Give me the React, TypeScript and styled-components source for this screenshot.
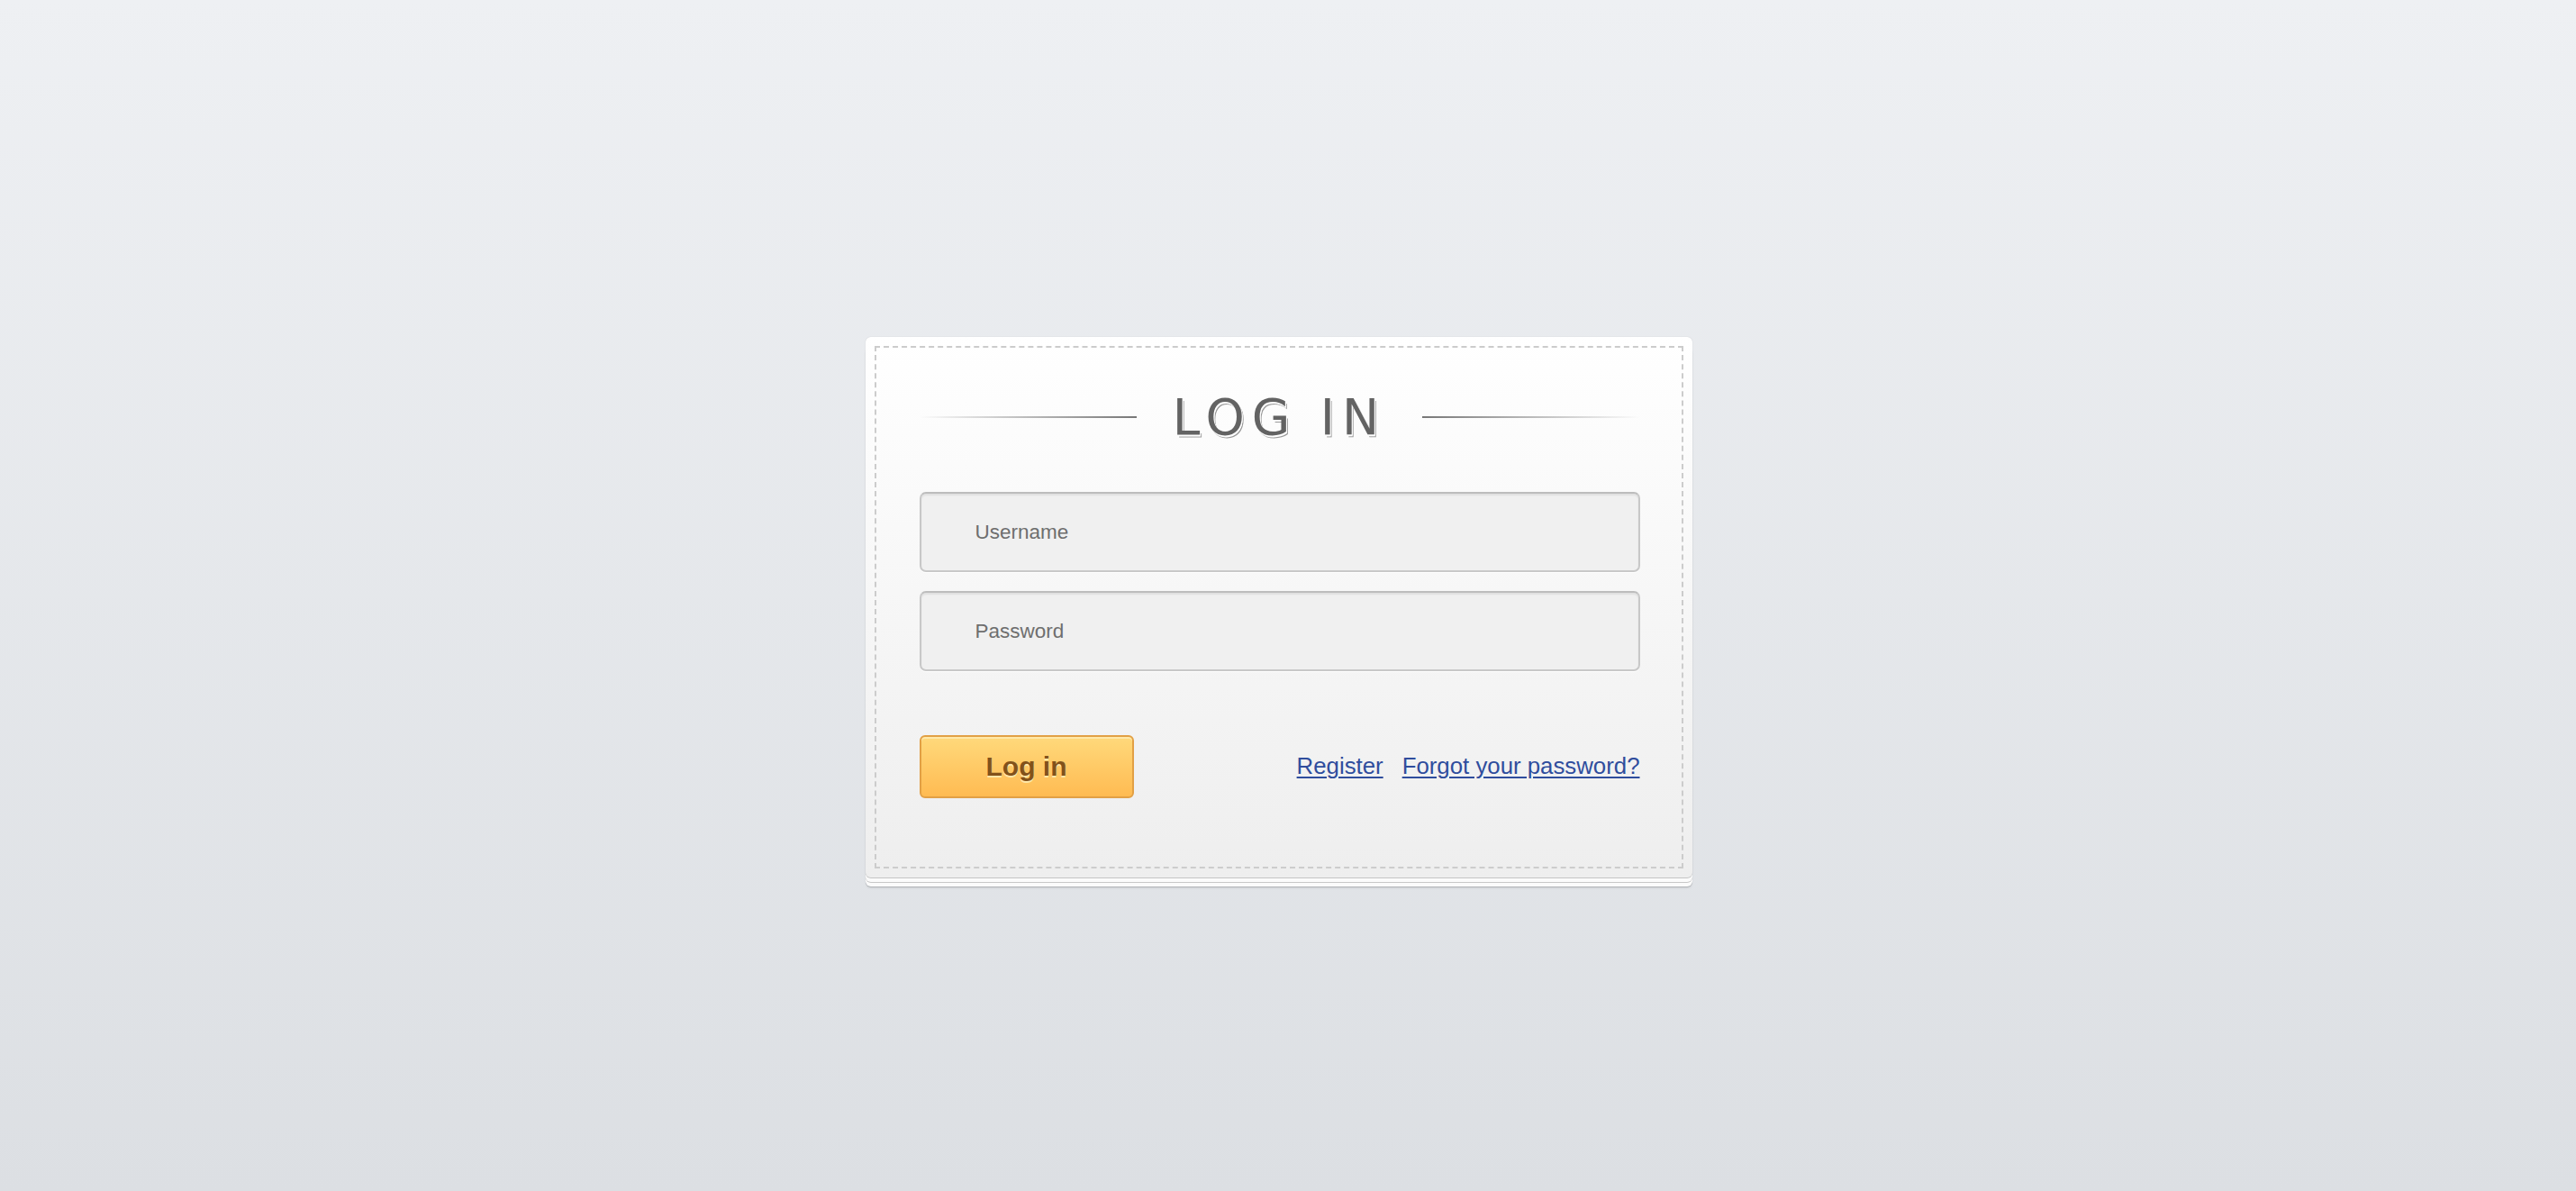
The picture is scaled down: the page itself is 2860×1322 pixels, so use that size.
import React from "react";
import styled, { createGlobalStyle } from "styled-components";

const GlobalStyle = createGlobalStyle`
  html, body { margin: 0; padding: 0; }
  body {
    font-family: "Liberation Sans", Arial, sans-serif;
    background: linear-gradient(180deg, #eef0f3 0%, #dcdfe3 100%);
    min-height: 100vh;
  }
`;

const Page = styled.div`
  min-height: 100vh;
  box-sizing: border-box;
  display: flex;
  justify-content: center;
  align-items: flex-start;
  padding: 374px 21px 0 0;
`;

const Card = styled.form`
  width: 918px;
  box-sizing: border-box;
  padding: 10px;
  border-radius: 6px;
  background: linear-gradient(180deg, #ffffff 0%, #eeeeee 100%);
  box-shadow:
    0 0 1px rgba(0, 0, 0, 0.25),
    0 1px 0 #cacaca,
    0 5px 0 #fbfbfb,
    0 6px 0 #c8c8c8,
    0 10px 0 #fbfbfb,
    0 11px 0 #b2b5b9,
    0 12px 2px rgba(0, 0, 0, 0.08);
`;

const Inner = styled.div`
  border: 2px dashed #cccccc;
  padding: 45px 46px 76px 48px;
  display: flex;
  flex-direction: column;
`;

const TitleRow = styled.div`
  display: flex;
  align-items: center;
  margin-bottom: 51px;
`;

const Rule = styled.span<{ $side: "left" | "right" }>`
  flex: 1;
  height: 2px;
  background: ${(p) =>
    p.$side === "left"
      ? "linear-gradient(90deg, rgba(120,120,120,0) 0%, #777 100%)"
      : "linear-gradient(90deg, #777 0%, rgba(120,120,120,0) 100%)"};
`;

const Title = styled.h1`
  margin: 0 40px;
  font-family: "DejaVu Sans", Verdana, sans-serif;
  font-weight: normal;
  font-size: 55px;
  line-height: 64px;
  letter-spacing: 8px;
  color: #636363;
  text-shadow: 1px 1px 0 #ffffff, 1px 2px 0 #ffffff, 2px 3px 0 #999999;
  white-space: nowrap;
`;

const Field = styled.input`
  display: block;
  width: 100%;
  height: 89px;
  box-sizing: border-box;
  margin: 0 0 21px;
  padding: 0 20px 0 60px;
  border: 2px solid #c8c8c8;
  border-top-color: #bdbdbd;
  border-radius: 7px;
  background: #f0f0f0;
  box-shadow: inset 0 2px 2px rgba(0, 0, 0, 0.07), 0 1px 0 #ffffff;
  font-family: "Liberation Sans", Arial, sans-serif;
  font-size: 22.5px;
  color: #555;
  outline: none;

  &::placeholder {
    color: #6e6e6e;
    opacity: 1;
  }
`;

const Actions = styled.div`
  display: flex;
  align-items: center;
  justify-content: space-between;
  margin-top: 50px;
`;

const Button = styled.button`
  width: 238px;
  height: 70px;
  box-sizing: border-box;
  border: 2px solid #e2a045;
  border-radius: 6px;
  background: linear-gradient(180deg, #ffd97b 0%, #ffbb52 100%);
  box-shadow: inset 0 2px 0 rgba(255, 240, 190, 0.7);
  font-family: "Liberation Sans", Arial, sans-serif;
  font-weight: bold;
  font-size: 30px;
  color: #82521a;
  text-shadow: 0 2px 0 #ffe7a8;
  cursor: pointer;
  padding: 0;
`;

const Links = styled.div`
  display: flex;
  gap: 21px;
  align-items: baseline;
  padding-bottom: 2px;
`;

const Link = styled.a`
  font-family: "Liberation Sans", Arial, sans-serif;
  font-size: 25.8px;
  color: #2f4d9d;
  text-decoration: underline;
  text-decoration-thickness: 2px;
  text-underline-offset: 3px;
  cursor: pointer;
`;

export default function App() {
  return (
    <>
      <GlobalStyle />
      <Page>
        <Card onSubmit={(e) => e.preventDefault()}>
          <Inner>
            <TitleRow>
              <Rule $side="left" />
              <Title>LOG IN</Title>
              <Rule $side="right" />
            </TitleRow>
            <Field type="text" placeholder="Username" />
            <Field type="password" placeholder="Password" />
            <Actions>
              <Button type="submit">Log in</Button>
              <Links>
                <Link href="#">Register</Link>
                <Link href="#">Forgot your password?</Link>
              </Links>
            </Actions>
          </Inner>
        </Card>
      </Page>
    </>
  );
}
